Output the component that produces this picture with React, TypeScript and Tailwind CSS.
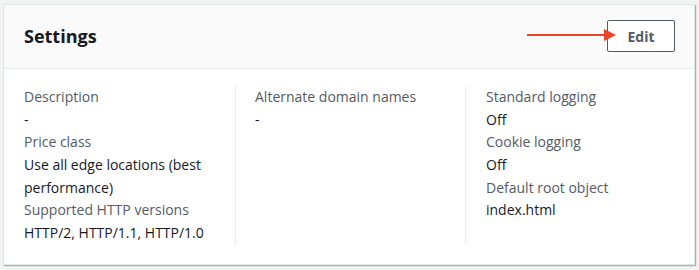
import React from "react";

const font = { fontFamily: '"Open Sans", "Noto Sans", Arial, sans-serif' };

function Field({ label, value }: { label: string; value: string }) {
  return (
    <div>
      <div className="text-[14px] leading-[22.67px] text-[#545b64]">{label}</div>
      <div className="text-[14px] leading-[22.67px] text-[#16191f]">{value}</div>
    </div>
  );
}

export default function App() {
  return (
    <div className="w-[699px] h-[270px] bg-[#f2f3f3] pt-[4px] pl-[3px] pr-[4px] pb-[5px]" style={font}>
      <div className="relative w-[692px] h-[261px] bg-white border border-[#e4e7e7] shadow-[1px_1px_1px_rgba(0,28,36,0.3)] flex flex-col">
        <div className="h-[64px] shrink-0 bg-[#fafafa] border-b border-[#eaeded] flex items-center justify-between pl-[20px] pr-[19px]">
          <h2 className="text-[18px] font-bold text-[#16191f] leading-[24px] -mt-[1px]">Settings</h2>
          <button className="w-[68px] h-[32px] border border-[#545b64] rounded-[2px] bg-white text-[14px] font-bold text-[#545b64] -mt-[1px]">
            Edit
          </button>
        </div>
        <svg className="absolute left-[523px] top-[23px]" width="90" height="14" viewBox="0 0 90 14">
          <line x1="0" y1="7" x2="80" y2="7" stroke="#ea4328" strokeWidth="2" />
          <polygon points="77,1 89,7 77,13" fill="#ea4328" />
        </svg>
        <div className="grid grid-cols-[232px_230px_1fr] pt-[17px] pb-[20px]">
          <div className="pl-[20px] pr-[20px] border-r border-[#eaeded]">
            <Field label="Description" value="-" />
            <Field label="Price class" value="Use all edge locations (best performance)" />
            <Field label="Supported HTTP versions" value="HTTP/2, HTTP/1.1, HTTP/1.0" />
          </div>
          <div className="pl-[19px] pr-[20px] border-r border-[#eaeded]">
            <Field label="Alternate domain names" value="-" />
          </div>
          <div className="pl-[20px] pr-[20px]">
            <Field label="Standard logging" value="Off" />
            <Field label="Cookie logging" value="Off" />
            <Field label="Default root object" value="index.html" />
          </div>
        </div>
      </div>
    </div>
  );
}
